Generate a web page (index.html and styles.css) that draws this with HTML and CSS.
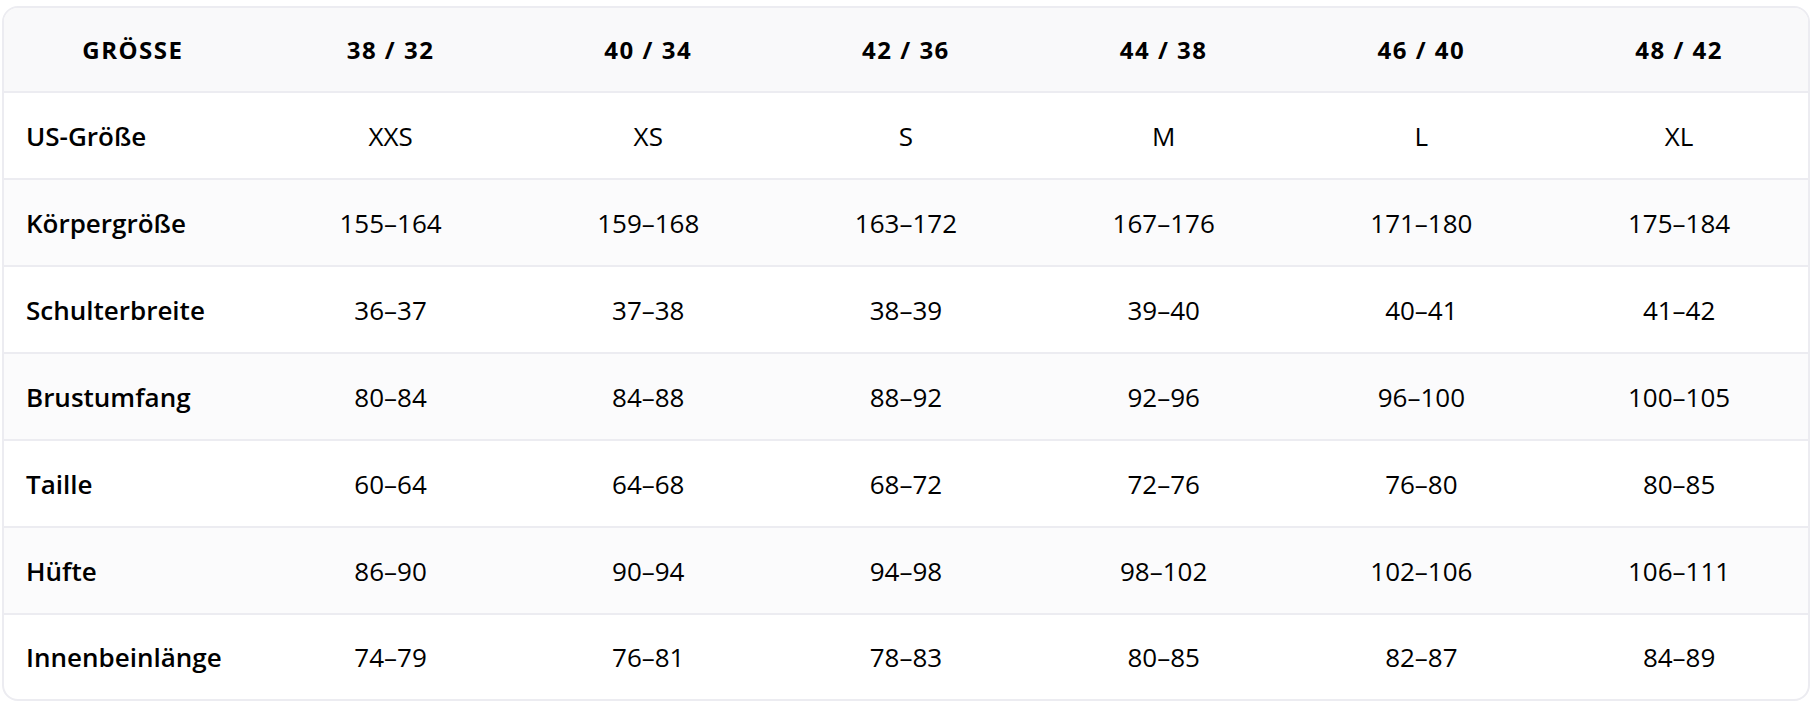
FILE: index.html
```html
<!DOCTYPE html>
<html lang="de">
<head>
<meta charset="utf-8">
<title>Größentabelle</title>
<link rel="stylesheet" href="styles.css">
</head>
<body>
<div class="card">
  <table class="sizes">
    <thead>
      <tr>
        <th>GRÖSSE</th>
        <th>38 / 32</th>
        <th>40 / 34</th>
        <th>42 / 36</th>
        <th>44 / 38</th>
        <th>46 / 40</th>
        <th>48 / 42</th>
      </tr>
    </thead>
    <tbody>
      <tr><td class="label">US-Größe</td><td>XXS</td><td>XS</td><td>S</td><td>M</td><td>L</td><td>XL</td></tr>
      <tr><td class="label">Körpergröße</td><td>155–164</td><td>159–168</td><td>163–172</td><td>167–176</td><td>171–180</td><td>175–184</td></tr>
      <tr><td class="label">Schulterbreite</td><td>36–37</td><td>37–38</td><td>38–39</td><td>39–40</td><td>40–41</td><td>41–42</td></tr>
      <tr><td class="label">Brustumfang</td><td>80–84</td><td>84–88</td><td>88–92</td><td>92–96</td><td>96–100</td><td>100–105</td></tr>
      <tr><td class="label">Taille</td><td>60–64</td><td>64–68</td><td>68–72</td><td>72–76</td><td>76–80</td><td>80–85</td></tr>
      <tr><td class="label">Hüfte</td><td>86–90</td><td>90–94</td><td>94–98</td><td>98–102</td><td>102–106</td><td>106–111</td></tr>
      <tr><td class="label">Innenbeinlänge</td><td>74–79</td><td>76–81</td><td>78–83</td><td>80–85</td><td>82–87</td><td>84–89</td></tr>
    </tbody>
  </table>
</div>
</body>
</html>
```
FILE: styles.css
```css
html, body {
  margin: 0;
  background: #ffffff;
}
body {
  padding: 6px 6px 0 2px;
  font-family: "Open Sans", "Noto Sans", sans-serif;
  color: #000000;
}
.card {
  width: 1808px;
  box-sizing: border-box;
  border: 2px solid #ececf1;
  border-radius: 16px;
  overflow: hidden;
  background: #ffffff;
}
.sizes {
  width: 100%;
  table-layout: fixed;
  border-collapse: collapse;
}
.sizes th {
  height: 83px;
  padding: 0;
  background: #f9f9fa;
  font-size: 24px;
  font-weight: 700;
  letter-spacing: 1.5px;
  text-align: center;
  border-bottom: 2px solid #ececf1;
}
.sizes td {
  height: 85px;
  padding: 0;
  font-size: 26px;
  font-weight: 400;
  text-align: center;
  border-bottom: 2px solid #ececf1;
}
.sizes tbody tr:nth-child(even) td {
  background: #fbfbfc;
}
.sizes tbody tr:last-child td {
  height: 84px;
  border-bottom: none;
}
.sizes td.label {
  text-align: left;
  padding-left: 22px;
  font-weight: 600;
}
```
